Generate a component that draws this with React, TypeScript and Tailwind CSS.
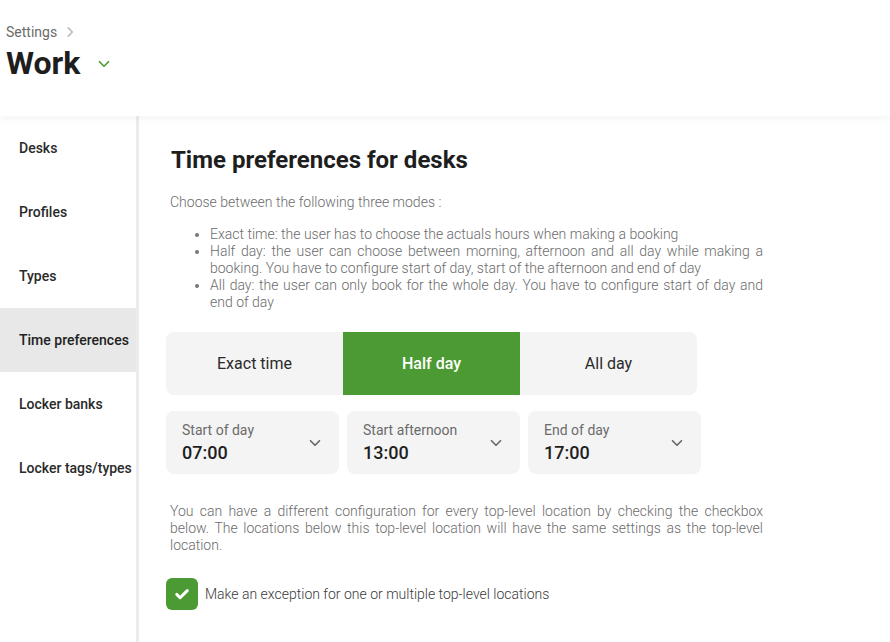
import React from "react";

const Chevron = ({ className = "" }: { className?: string }) => (
  <svg viewBox="0 0 24 24" width="18" height="18" className={className} fill="none" stroke="currentColor" strokeWidth="2.2" strokeLinecap="round" strokeLinejoin="round">
    <path d="M6 9l6 6 6-6" />
  </svg>
);

export default function App() {
  const items = ["Desks", "Profiles", "Types", "Time preferences", "Locker banks", "Locker tags/types"];
  const selects = [
    { label: "Start of day", value: "07:00" },
    { label: "Start afternoon", value: "13:00" },
    { label: "End of day", value: "17:00" },
  ];
  return (
    <div className="w-[890px] h-[642px] overflow-hidden bg-white text-[#222]" style={{ fontFamily: "Roboto, 'Liberation Sans', sans-serif" }}>
      <header className="h-[116px] px-[6px] pt-[23px] relative z-10 shadow-[0_4px_6px_rgba(0,0,0,0.035)]">
        <div className="flex items-center gap-[6px] text-[14px] text-[#6b6b6b] leading-[18px]">
          <span>Settings</span>
          <svg viewBox="0 0 24 24" width="14" height="14" fill="none" stroke="#bdbdbd" strokeWidth="3" strokeLinecap="round" strokeLinejoin="round">
            <path d="M9 5l7 7-7 7" />
          </svg>
        </div>
        <div className="flex items-center mt-[2px]">
          <h1 className="text-[32px] font-bold leading-[40px] text-[#1e1e1e]">Work</h1>
          <Chevron className="ml-[15px] mt-[2px] text-[#4b9a30]" />
        </div>
      </header>
      <div className="flex h-[526px]">
        <nav className="w-[139px] shrink-0 border-r-[3px] border-[#ececec]">
          {items.map((it) => (
            <div
              key={it}
              className={`h-[64px] flex items-center pl-[19px] text-[14px] font-medium ${it === "Time preferences" ? "bg-[#e8e8e8] text-[#222]" : "text-[#2a2a2a]"}`}
            >
              {it}
            </div>
          ))}
        </nav>
        <main className="pl-[27px] pt-[29px] w-[624px]">
          <h2 className="pl-[5px] text-[24px] font-bold leading-[30px] text-[#1e1e1e]">Time preferences for desks</h2>
          <p className="pl-[4px] mt-[19px] text-[14px] leading-[17px] text-[#6b6b6b] font-light">Choose between the following three modes :</p>
          <ul className="pl-[44px] mt-[15px] list-disc text-[14px] leading-[17px] text-[#6b6b6b] font-light text-justify marker:text-[#777]">
            <li>Exact time: the user has to choose the actuals hours when making a booking</li>
            <li>Half day: the user can choose between morning, afternoon and all day while making a booking. You have to configure start of day, start of the afternoon and end of day</li>
            <li>All day: the user can only book for the whole day. You have to configure start of day and end of day</li>
          </ul>
          <div className="mt-[21px] flex w-[531px] h-[63px] rounded-[8px] overflow-hidden bg-[#f4f4f4] text-[16px]">
            <div className="flex-1 flex items-center justify-center text-[#2a2a2a]">Exact time</div>
            <div className="flex-1 flex items-center justify-center bg-[#4b9a33] text-white font-medium">Half day</div>
            <div className="flex-1 flex items-center justify-center text-[#2a2a2a]">All day</div>
          </div>
          <div className="mt-[16px] flex gap-[8px]">
            {selects.map((s) => (
              <div key={s.label} className="w-[173px] h-[63px] rounded-[8px] bg-[#f4f4f4] flex items-center justify-between pl-[16px] pr-[15px]">
                <div className="flex flex-col -mt-[1px]">
                  <span className="text-[14px] leading-[18px] text-[#6b6b6b]">{s.label}</span>
                  <span className="text-[18px] leading-[22px] font-medium text-[#1e1e1e] mt-[3px]">{s.value}</span>
                </div>
                <Chevron className="text-[#666]" />
              </div>
            ))}
          </div>
          <p className="pl-[4px] mt-[29px] text-[14px] leading-[17px] text-[#6b6b6b] font-light text-justify">
            You can have a different configuration for every top-level location by checking the checkbox below. The locations below this top-level location will have the same settings as the top-level location.
          </p>
          <div className="mt-[24px] flex items-center gap-[7px]">
            <div className="w-[32px] h-[32px] rounded-[6px] bg-[#4b9a33] flex items-center justify-center">
              <svg viewBox="0 0 24 24" width="18" height="18" fill="none" stroke="white" strokeWidth="4" strokeLinecap="round" strokeLinejoin="round">
                <path d="M5 12.5l4.5 4.5L19 7.5" />
              </svg>
            </div>
            <span className="text-[14px] text-[#3a3a3a] font-light">Make an exception for one or multiple top-level locations</span>
          </div>
        </main>
      </div>
    </div>
  );
}
